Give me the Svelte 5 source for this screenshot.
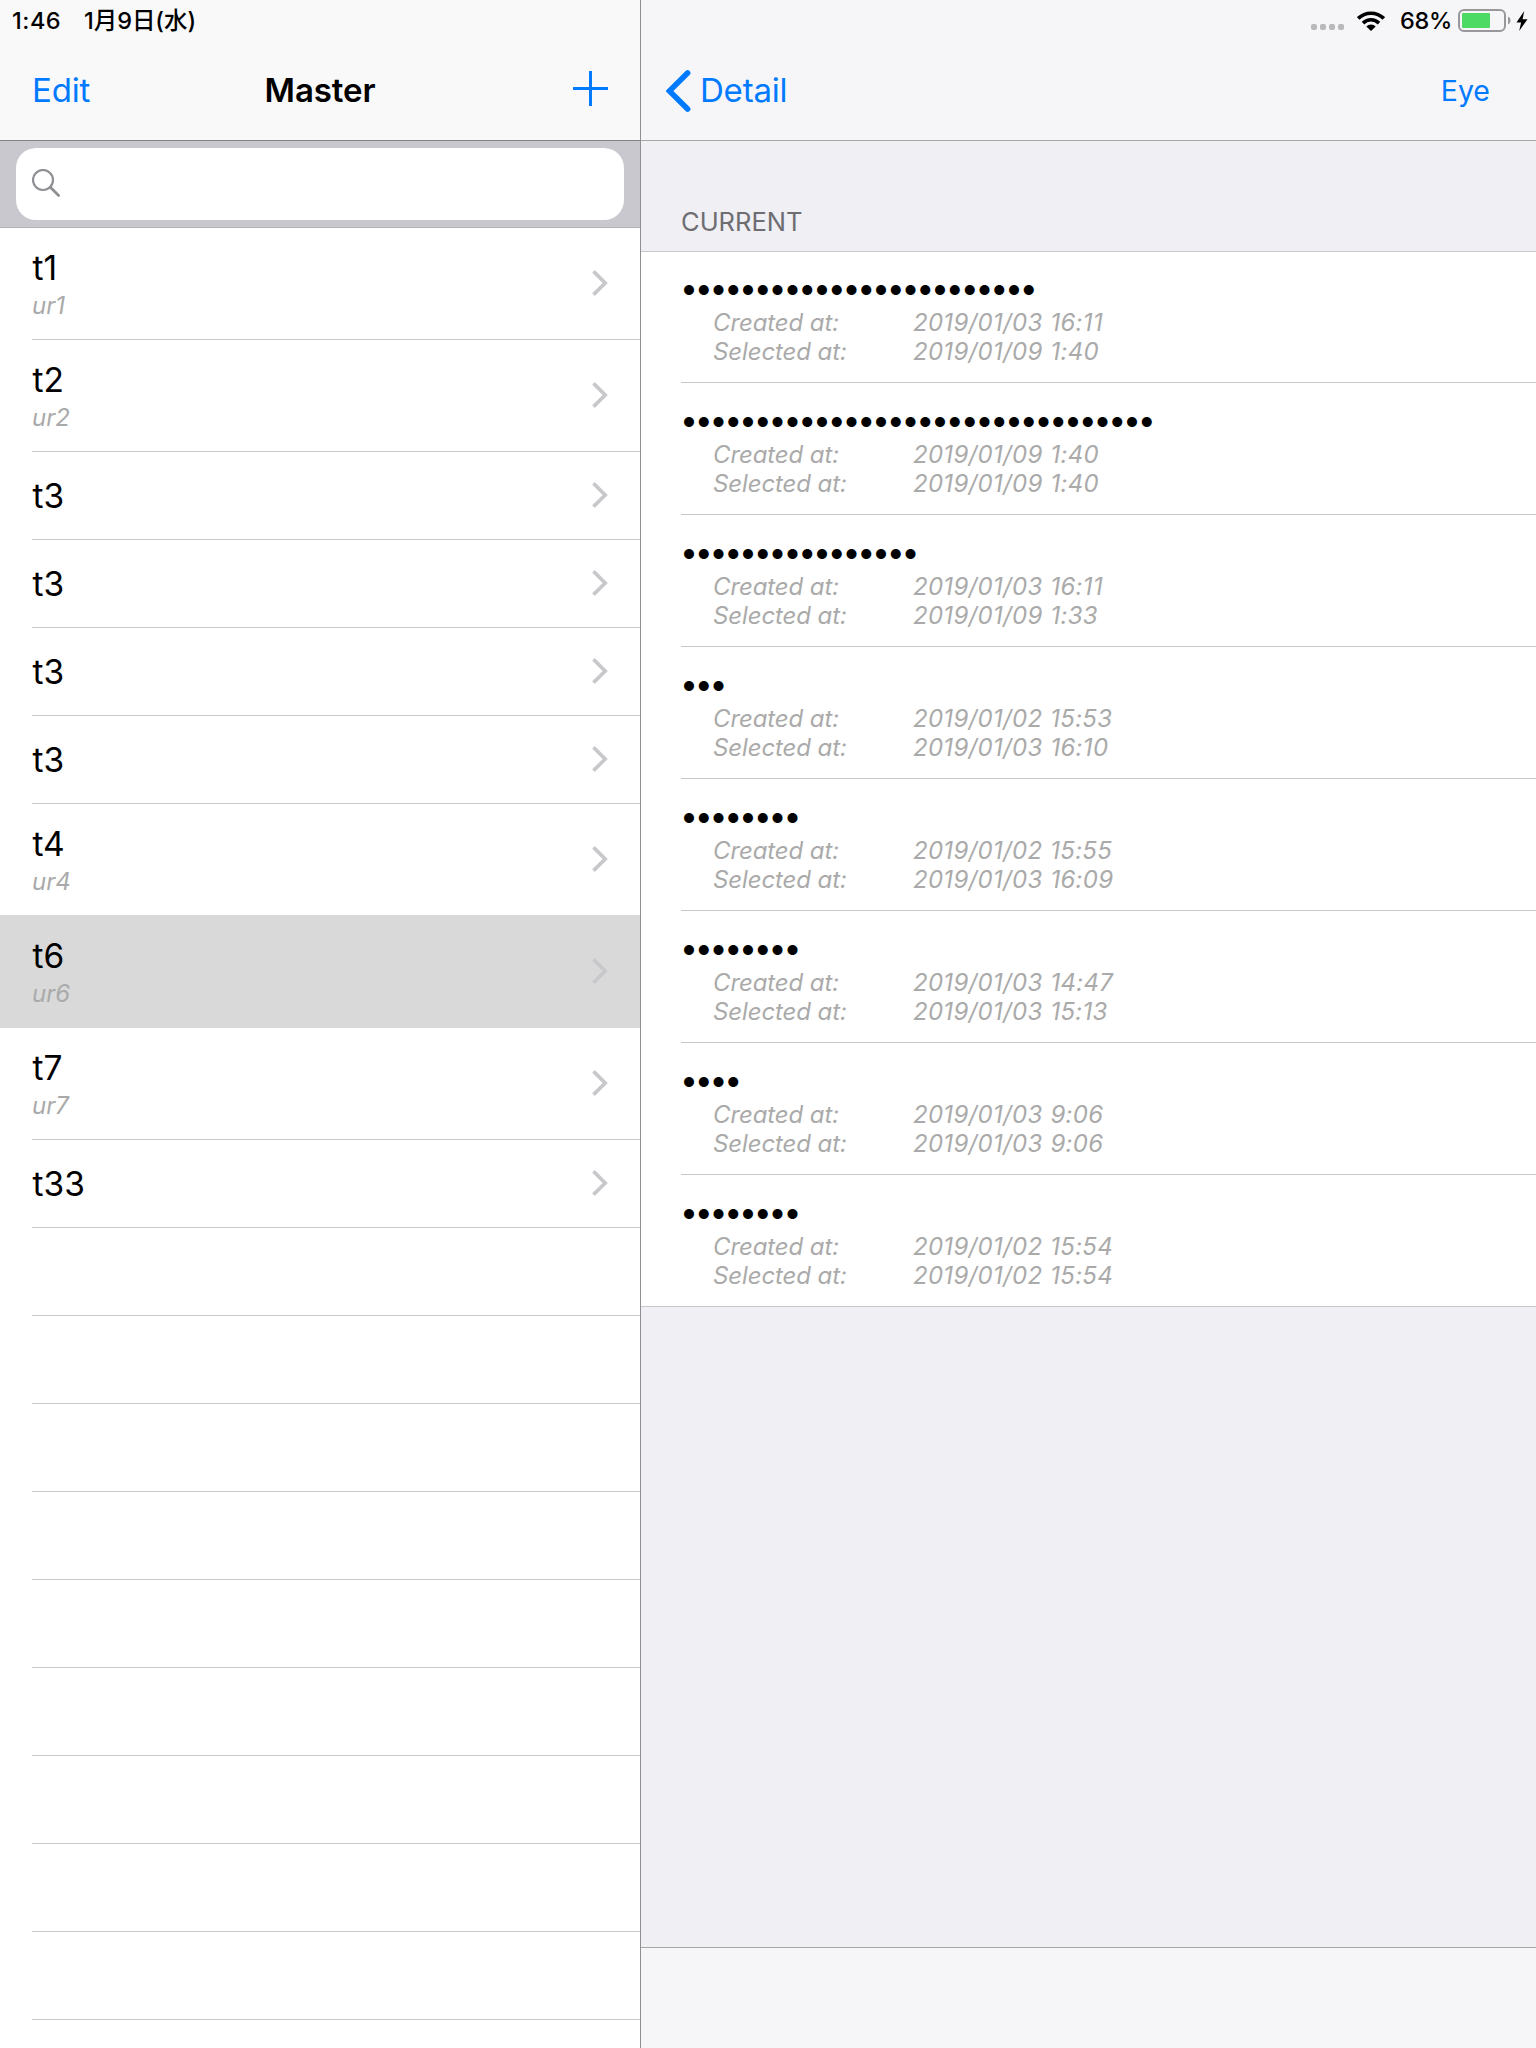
<script>
  const sites = [
    { name: 't1', user: 'ur1' },
    { name: 't2', user: 'ur2' },
    { name: 't3' },
    { name: 't3' },
    { name: 't3' },
    { name: 't3' },
    { name: 't4', user: 'ur4' },
    { name: 't6', user: 'ur6', selected: true },
    { name: 't7', user: 'ur7' },
    { name: 't33' },
  ];
  const blanks = Array.from({ length: 10 });

  const entries = [
    { length: 24, created: '2019/01/03 16:11', selected: '2019/01/09 1:40' },
    { length: 32, created: '2019/01/09 1:40', selected: '2019/01/09 1:40' },
    { length: 16, created: '2019/01/03 16:11', selected: '2019/01/09 1:33' },
    { length: 3, created: '2019/01/02 15:53', selected: '2019/01/03 16:10' },
    { length: 8, created: '2019/01/02 15:55', selected: '2019/01/03 16:09' },
    { length: 8, created: '2019/01/03 14:47', selected: '2019/01/03 15:13' },
    { length: 4, created: '2019/01/03 9:06', selected: '2019/01/03 9:06' },
    { length: 8, created: '2019/01/02 15:54', selected: '2019/01/02 15:54' },
  ];
</script>

<div class="screen">
  <section class="master">
    <header class="bar">
      <div class="status">
        <span class="time">1:46</span>
        <span class="date">1月9日(水)</span>
      </div>
      <div class="nav">
        <span class="action edit">Edit</span>
        <h1>Master</h1>
        <svg class="plus" width="35" height="35" viewBox="0 0 35 35">
          <path d="M0 17.5H35M17.5 0V35" stroke="#007aff" stroke-width="3" />
        </svg>
      </div>
    </header>
    <div class="search">
      <div class="field">
        <svg width="30" height="30" viewBox="0 0 30 30" fill="none" stroke="#8e8e93">
          <circle cx="11" cy="11" r="10" stroke-width="2.2" />
          <path d="M18.6 18.6L26.6 26.6" stroke-width="2.8" stroke-linecap="round" />
        </svg>
      </div>
    </div>
    <ul class="sites">
      {#each sites as site}
        <li class:tall={site.user} class:selected={site.selected}>
          <div class="cell">
            <div class="labels">
              <span class="name">{site.name}</span>
              {#if site.user}<span class="user">{site.user}</span>{/if}
            </div>
            <svg class="chevron" width="16" height="26" viewBox="0 0 16 26">
              <path d="M1.5 1.4L13.2 13L1.5 24.6" fill="none" stroke="#c7c7cc" stroke-width="3.6" />
            </svg>
          </div>
        </li>
      {/each}
      {#each blanks as _}
        <li><div class="cell"></div></li>
      {/each}
    </ul>
  </section>

  <section class="detail">
    <header class="bar">
      <div class="status right">
        <span class="signal"><i></i><i></i><i></i><i></i></span>
        <svg class="wifi" width="28" height="20" viewBox="0 0 28 20">
          <g fill="none" stroke="#000" stroke-width="3.6">
            <path d="M1.2 7.4A18.3 18.3 0 0 1 26.8 7.4" />
            <path d="M6 12.1A11.4 11.4 0 0 1 22 12.1" />
          </g>
          <path d="M14 20L9.3 15.4A6.6 6.6 0 0 1 18.7 15.4Z" />
        </svg>
        <span class="percent">68%</span>
        <svg class="battery" width="53" height="23" viewBox="0 0 53 23">
          <rect x="1" y="1" width="46" height="21" rx="5" fill="none" stroke="#98989b" stroke-width="2" />
          <rect x="4" y="4" width="28" height="15" rx="1" fill="#4cd964" />
          <path d="M50 7.5A4.4 4.4 0 0 1 50 15.5Z" fill="#98989b" />
        </svg>
        <svg class="bolt" width="12" height="20" viewBox="0 0 12 20">
          <path d="M8.2 0L0.5 11.4H5.1L3.2 20L11.5 8.2H6.6Z" />
        </svg>
      </div>
      <div class="nav">
        <svg class="back" width="25" height="42" viewBox="0 0 25 42">
          <path d="M21.6 3L3.4 21L21.6 39" fill="none" stroke="#007aff" stroke-width="5.6" stroke-linecap="round" stroke-linejoin="miter" />
        </svg>
        <span class="action">Detail</span>
        <span class="eye">Eye</span>
      </div>
    </header>
    <h2>CURRENT</h2>
    <ul class="entries">
      {#each entries as entry}
        <li>
          <div class="entry">
            <div class="secret">{'•'.repeat(entry.length)}</div>
            <dl>
              <dt>Created at:</dt>
              <dd>{entry.created}</dd>
              <dt>Selected at:</dt>
              <dd>{entry.selected}</dd>
            </dl>
          </div>
        </li>
      {/each}
    </ul>
    <footer></footer>
  </section>
</div>

<style>
  :global(body) {
    margin: 0;
    background: #fff;
  }
  .screen {
    display: flex;
    width: 1536px;
    height: 2048px;
    overflow: hidden;
    font-family: Inter, 'Noto Sans CJK JP', sans-serif;
    color: #000;
  }
  h1, h2, ul, dl, dd {
    margin: 0;
    padding: 0;
    list-style: none;
  }
  svg {
    display: block;
    flex: none;
  }
  .master {
    width: 640px;
    flex: none;
    overflow: hidden;
    background: #fff;
    border-right: 1px solid #8e8e93;
  }
  .bar {
    height: 140px;
    box-sizing: content-box;
    border-bottom: 1px solid #828287;
    background: #f9f9f9;
  }
  .status {
    height: 41px;
    box-sizing: border-box;
    padding-left: 12px;
    display: flex;
    align-items: center;
    font-size: 23.5px;
    font-weight: 500;
    line-height: 41px;
    white-space: nowrap;
  }
  .time {
    width: 72px;
    letter-spacing: 0.5px;
  }
  .date {
    letter-spacing: -0.05px;
  }
  .nav {
    height: 99px;
    display: flex;
    align-items: center;
    line-height: 99px;
  }
  .action {
    font-size: 33px;
    color: #007aff;
    letter-spacing: -0.2px;
  }
  .edit {
    width: 120px;
    padding-left: 32px;
  }
  h1 {
    flex: 1;
    text-align: center;
    font-size: 33px;
    font-weight: 600;
    letter-spacing: -0.1px;
  }
  .plus {
    margin: 0 32px 5px 85px;
  }
  .search {
    box-sizing: border-box;
    height: 87px;
    padding: 7px 16px 7px;
    background: #c9c8ce;
    border-bottom: 1px solid #b2b1b6;
  }
  .field {
    box-sizing: border-box;
    height: 72px;
    padding: 21px 16px;
    border-radius: 20px;
    background: #fff;
  }
  .sites li {
    box-sizing: border-box;
    height: 88px;
    padding-left: 32px;
  }
  .sites li.tall {
    height: 112px;
  }
  .cell {
    box-sizing: border-box;
    height: 100%;
    display: flex;
    align-items: center;
    justify-content: space-between;
    padding-right: 32px;
    border-bottom: 1px solid #c8c7cc;
  }
  .selected {
    background: #d9d9d9;
    box-shadow: 0 -1px #d9d9d9;
  }
  .selected .cell {
    border-color: #d9d9d9;
  }
  .chevron {
    margin-bottom: 2px;
  }
  .labels {
    display: flex;
    flex-direction: column;
  }
  .name {
    padding-left: 0.5px;
    font-size: 33.5px;
    line-height: 40px;
  }
  .user {
    font-size: 24px;
    line-height: 36px;
    font-style: italic;
    color: #aaa;
  }
  .tall .labels {
    padding-top: 5px;
  }
  .detail {
    flex: 1;
    display: flex;
    flex-direction: column;
    background: #efeff4;
  }
  .detail .bar {
    background: #f6f6f8;
    border-color: #a7a7aa;
  }
  .right {
    justify-content: flex-end;
    padding-right: 8px;
  }
  .signal {
    display: flex;
    gap: 3px;
    margin: 13px 13px 0 0;
  }
  .signal i {
    width: 6px;
    height: 6px;
    border-radius: 2px;
    background: #b9b9bb;
  }
  .wifi {
    margin-right: 15px;
  }
  .percent {
    width: 52px;
    margin-right: 6px;
    letter-spacing: -0.3px;
  }
  .battery {
    margin-right: 5px;
  }
  .back {
    margin: 0 9px 0 25px;
  }
  .eye {
    margin: 0 46px 0 auto;
    font-size: 28.5px;
    color: #007aff;
  }
  h2 {
    height: 110px;
    box-sizing: border-box;
    padding: 65px 0 0 40px;
    font-size: 25.5px;
    font-weight: 400;
    line-height: 32px;
    color: #6d6d72;
  }
  .entries {
    background: #fff;
    border-top: 1px solid #c8c7cc;
    border-bottom: 1px solid #c8c7cc;
  }
  .entries li {
    height: 132px;
    padding-left: 40px;
  }
  .entries li:first-child,
  .entries li:last-child {
    height: 131px;
  }
  .entry {
    box-sizing: border-box;
    height: 100%;
    display: flex;
    flex-direction: column;
    justify-content: flex-end;
    padding-bottom: 16px;
    border-bottom: 1px solid #c8c7cc;
  }
  li:last-child .entry {
    border-bottom: 0;
  }
  .secret {
    margin-left: -1px;
    font-size: 32px;
    line-height: 40px;
    letter-spacing: -3.23px;
    white-space: nowrap;
  }
  dl {
    display: grid;
    grid-template-columns: 200px auto;
    padding-left: 32px;
    font-size: 24px;
    font-style: italic;
    line-height: 29px;
    color: #aaa;
  }
  dt {
    letter-spacing: -0.1px;
  }
  dd {
    letter-spacing: 0.3px;
    word-spacing: 0.8px;
  }
  footer {
    box-sizing: border-box;
    height: 101px;
    margin-top: auto;
    background: #f6f6f8;
    border-top: 1px solid #a7a7aa;
  }
</style>
